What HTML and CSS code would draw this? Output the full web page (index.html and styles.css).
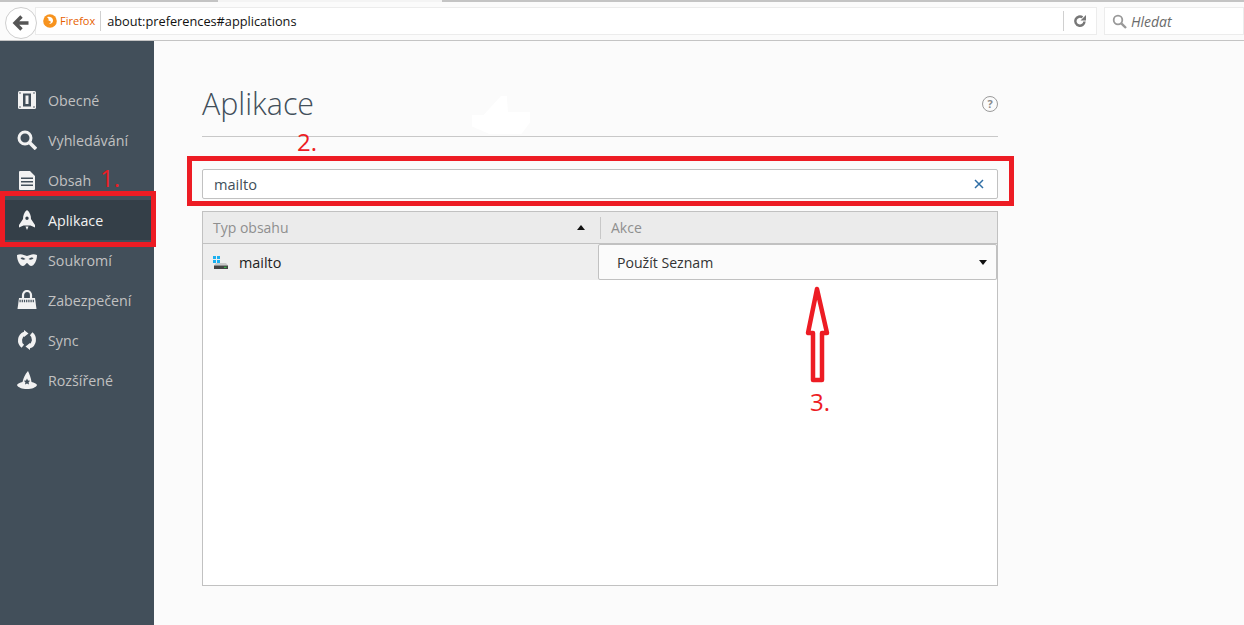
FILE: index.html
```html
<!DOCTYPE html>
<html lang="cs">
<head>
<meta charset="utf-8">
<title>Aplikace</title>
<link rel="stylesheet" href="styles.css">
</head>
<body>
<div class="tabstrip"><span class="tabgap"></span></div>
<header class="toolbar">
  <button class="back" aria-label="Zpět">
    <svg width="18" height="18" viewBox="0 0 18 18"><path d="M9.500 2.500 3 9l6.500 6.500M3.500 9H16.500" fill="none" stroke="#555" stroke-width="3.400"/></svg>
  </button>
  <div class="urlbar">
    <svg class="fx" width="14" height="14" viewBox="0 0 14 14"><circle cx="7" cy="7" r="6.800" fill="#f7931e"/><path d="M4 3.200C6 2.300 9.500 3 10 6c.4 2.500-1.800 4.300-4 3.800 1.600-.4 2-1.600 1.500-2.500C7 6.500 5.500 7 4.600 6.200 5.500 6 5.900 5.500 5.600 5 5.300 4.300 4.700 3.800 4 3.200Z" fill="#fff"/></svg>
    <span class="fxname">Firefox</span>
    <span class="url">about:preferences#applications</span>
    <span class="reload">
      <svg width="14" height="14" viewBox="0 0 14 14"><path d="M11.500 7.500A4.600 4.600 0 1 1 9.500 3.300" fill="none" stroke="#777" stroke-width="2.500"/><path d="M7.500 6.500H13V1z" fill="#777"/></svg>
    </span>
  </div>
  <div class="searchbar">
    <svg width="15" height="15" viewBox="0 0 15 15"><circle cx="6" cy="6" r="4.300" fill="none" stroke="#999" stroke-width="1.800"/><path d="M9.300 9.300 14 14" stroke="#999" stroke-width="2.400"/></svg>
    <span class="hledat">Hledat</span>
  </div>
</header>
<div class="page">
  <nav class="sidebar">
    <a class="item"><svg class="ico" viewBox="0 0 20 20"><rect x="1" y="1" width="18" height="18" rx="1.500" fill="#f2f2f2"/><path fill-rule="evenodd" d="M6 3.500h8v13H6zM8.500 5.500v8.500h3V5.500z" fill="#424f5a"/><circle cx="3" cy="3" r=".8" fill="#424f5a"/><circle cx="17" cy="3" r=".8" fill="#424f5a"/><circle cx="3" cy="17" r=".8" fill="#424f5a"/><circle cx="17" cy="17" r=".8" fill="#424f5a"/></svg>Obecné</a>
    <a class="item"><svg class="ico" viewBox="0 0 20 20"><circle cx="8" cy="8" r="6" fill="none" stroke="#f2f2f2" stroke-width="3"/><path d="M12.500 12.500 19 19" stroke="#f2f2f2" stroke-width="3.600"/></svg>Vyhledávání</a>
    <a class="item"><svg class="ico" viewBox="0 0 20 20"><path fill-rule="evenodd" d="M3 1h10l5 5v13a1 1 0 0 1-1 1H3a1 1 0 0 1-1-1V2a1 1 0 0 1 1-1zM4 7.500v1.500h12V7.500zM4 11v1.500h12V11zM4 14.500V16h12v-1.500z" fill="#f2f2f2"/></svg>Obsah</a>
    <a class="item active"><svg class="ico" viewBox="0 0 20 20"><path fill-rule="evenodd" d="M10 0c3 2 4 6 4 9l4 6v2.500l-4.500-2h-7L2 17.500V15l4-6c0-3 1-7 4-9zM10 6.500a1.700 1.700 0 1 0 0 3.400 1.700 1.700 0 0 0 0-3.400z" fill="#f2f2f2"/><path d="M8.500 16.500h3L10 20z" fill="#f2f2f2"/></svg>Aplikace</a>
    <a class="item"><svg class="ico" viewBox="0 0 20 20"><path fill-rule="evenodd" d="M0 5c4-2 7 0 10 1 3-1 6-3 10-1 0 6-3 11-6 11-2 0-3-3-4-3s-2 3-4 3C3 16 0 11 0 5zM3.500 8c1 2 3.500 2 5 1-1.500-1.500-4-2-5-1zM11.500 9c1.500 1 4 1 5-1-1-1-3.500-.5-5 1z" fill="#f2f2f2"/></svg>Soukromí</a>
    <a class="item"><svg class="ico" viewBox="0 0 20 20"><path d="M6 8V5a4 4 0 0 1 8 0v3" fill="none" stroke="#f2f2f2" stroke-width="2.200"/><path d="M2 8h16l1.500 11H.5z" fill="#f2f2f2"/><path d="M2.500 11h15" stroke="#424f5a" stroke-width="2.400" stroke-dasharray="1.200 1"/></svg>Zabezpečení</a>
    <a class="item"><svg class="ico" viewBox="0 0 20 20"><path d="M7.500 3.500A7.500 7.500 0 0 0 5.800 16.200M12.500 16.500A7.500 7.500 0 0 0 14.200 3.800" fill="none" stroke="#f2f2f2" stroke-width="4"/><path d="M7 0l4.500 3.500L7 7zM13 13l-4.500 3.500L13 20z" fill="#f2f2f2"/></svg>Sync</a>
    <a class="item"><svg class="ico" viewBox="0 0 20 20"><path d="M11 1c1.500 3 3 7 3.500 11 2.500.5 5 1.500 5.500 3-1 2.500-5 4-10 4S1 17.500 0 15c.5-1.500 3-2.500 5.500-3C6.500 8 8 4 11 1z" fill="#f2f2f2"/><path d="m10 8.500 1 2 2.200.3-1.600 1.500.4 2.200-2-1-2 1 .4-2.200-1.600-1.500 2.200-.3z" fill="#424f5a"/></svg>Rozšířené</a>
  </nav>
  <main class="content">
    <div class="head">
      <h1>Aplikace</h1>
      <span class="help">?</span>
    </div>
    <div class="filter">
      <span>mailto</span>
      <svg width="10" height="10" viewBox="0 0 10 10"><path d="M1 1l8 8M9 1l-8 8" stroke="#2f6ea5" stroke-width="1.500"/></svg>
    </div>
    <section class="table">
      <div class="thead">
        <div class="th th-type">Typ obsahu<i class="sort"></i></div>
        <div class="th th-action">Akce</div>
      </div>
      <div class="row">
        <div class="cell-type">
          <svg width="16" height="14" viewBox="0 0 16 14"><path d="M0 1h3v3H0zM4 1h3v3H4zM0 5h3v3H0zM4 5h3v3H4z" fill="#1cb0f0"/><path d="M3 8h10l2 2.500H1z" fill="#c9c9c9"/><path d="M1 10.500h14V14H1z" fill="#444"/><path d="M11 11.800h2.500v1H11z" fill="#35d04a"/></svg>
          <span>mailto</span>
        </div>
        <div class="select">Použít Seznam<i class="caret"></i></div>
      </div>
    </section>
  </main>
</div>
<div class="mark mark-nav"></div>
<div class="mark mark-filter"></div>
<div class="smudge"></div>
<span class="note note1">1.</span>
<span class="note note2">2.</span>
<span class="note note3">3.</span>
<svg class="arrow" width="30" height="100" viewBox="0 0 30 100"><path d="M13 3 4 47h5v47h9V47h5z" fill="#fff" stroke="#ed1c24" stroke-width="4.500" stroke-linejoin="round"/></svg>
</body>
</html>
```
FILE: styles.css
```css
* { box-sizing: border-box; }
html, body { margin: 0; height: 625px; overflow: hidden; }
body { font-family: "Open Sans", sans-serif; background: #fbfbfb; position: relative; }

.tabstrip { height: 2px; background: #c4c4c4; display: flex; justify-content: flex-start; }
.tabgap { width: 224px; height: 2px; margin-left: 218px; background: #f4f4f4; }

.toolbar { height: 39px; background: #fbfbfb; border-bottom: 1px solid #c4c4c4; display: flex; align-items: flex-start; padding: 5px 0 0 5px; position: relative; }
.back { width: 32px; height: 32px; border-radius: 50%; background: #fff; border: 1px solid #cfcfcf; padding: 0; display: flex; align-items: center; justify-content: center; flex: none; margin-right: -2px; position: relative; z-index: 1; }
.urlbar { width: 1062px; height: 28px; background: #fff; border: 1px solid #ececec; display: flex; align-items: center; padding-left: 7px; flex: none; }
.fx { flex: none; }
.fxname { font-size: 11px; color: #e66000; margin-left: 3px; padding-right: 5px; border-right: 1px solid #d0d0d0; line-height: 20px; }
.url { font-size: 12.750px; color: #111; margin-left: 6px; flex: 1; }
.reload { width: 33px; height: 20px; border-left: 1px solid #d0d0d0; display: flex; align-items: center; justify-content: center; }
.searchbar { height: 28px; flex: 1; margin-left: 7px; background: #fff; border: 1px solid #ececec; display: flex; align-items: center; padding-left: 7px; gap: 4px; }
.hledat { font-size: 14px; font-style: italic; color: #6b6b6b; }

.page { display: flex; height: 584px; }
.sidebar { width: 154px; flex: none; background: #424f5a; padding-top: 39px; display: flex; flex-direction: column; }
.item { height: 40px; display: flex; align-items: center; padding-left: 17px; font-size: 14.250px; color: #c1c1c1; }
.item.active { background: #343f48; color: #f2f2f2; }
.ico { width: 20px; height: 20px; margin-right: 11px; flex: none; }

.content { width: 796px; margin-left: 48px; }
.head { height: 57px; margin-top: 39px; border-bottom: 1px solid #c8c8c8; display: flex; justify-content: space-between; align-items: flex-start; }
h1 { margin: 0; font-size: 30.400px; font-weight: 300; line-height: 48px; color: #424f5a; }
.help { width: 16px; height: 16px; margin: 16px 0 0; border: 1.500px solid #9a9a9a; border-radius: 50%; font-size: 11px; font-weight: 700; line-height: 13px; text-align: center; color: #8a8a8a; }

.filter { height: 30px; margin-top: 32px; background: #fff; border: 1px solid #c1c1c1; border-radius: 2px; display: flex; align-items: center; justify-content: space-between; padding: 0 13px 0 11px; font-size: 14.600px; color: #424f5a; }

.table { height: 375px; margin-top: 12px; background: #fff; border: 1px solid #c1c1c1; }
.thead { height: 32px; background: #ebebeb; border-bottom: 1px solid #c1c1c1; display: flex; align-items: center; font-size: 14px; color: #8f8f8f; }
.th { display: flex; align-items: center; height: 22px; }
.th-type { width: 397px; padding-left: 10px; justify-content: space-between; padding-right: 15px; }
.th-action { flex: 1; border-left: 1px solid #c8c8c8; padding-left: 10px; }
.sort { width: 0; height: 0; border: 4px solid transparent; border-top: 0; border-bottom: 5px solid #111; }
.row { height: 36px; background: #eee; display: flex; }
.cell-type { width: 395px; display: flex; align-items: center; padding-left: 10px; gap: 10px; font-size: 14.400px; color: #222; }
.select { flex: 1; background: #fbfbfb; border: 1px solid #c1c1c1; border-radius: 2px; display: flex; align-items: center; justify-content: space-between; padding: 0 9px 0 18px; font-size: 14.100px; color: #333; }
.caret { width: 0; height: 0; border: 4px solid transparent; border-bottom: 0; border-top: 5px solid #111; }

.mark { position: absolute; border: 5px solid #ed1c24; }
.mark-nav { left: 0; top: 191px; width: 156px; height: 56px; }
.mark-filter { left: 187px; top: 156px; width: 827px; height: 50px; }
.smudge { position: absolute; left: 472px; top: 96px; width: 58px; height: 38px; background: #fff; clip-path: polygon(50% 0, 60% 0, 62% 42%, 100% 42%, 100% 70%, 85% 100%, 30% 100%, 0 80%, 0 50%, 20% 50%); }
.note { position: absolute; font-size: 24px; line-height: 30px; color: #ed1c24; }
.note1 { left: 100px; top: 163px; }
.note2 { left: 297px; top: 127px; }
.note3 { left: 810px; top: 387px; }
.arrow { position: absolute; left: 804px; top: 286px; }
```
